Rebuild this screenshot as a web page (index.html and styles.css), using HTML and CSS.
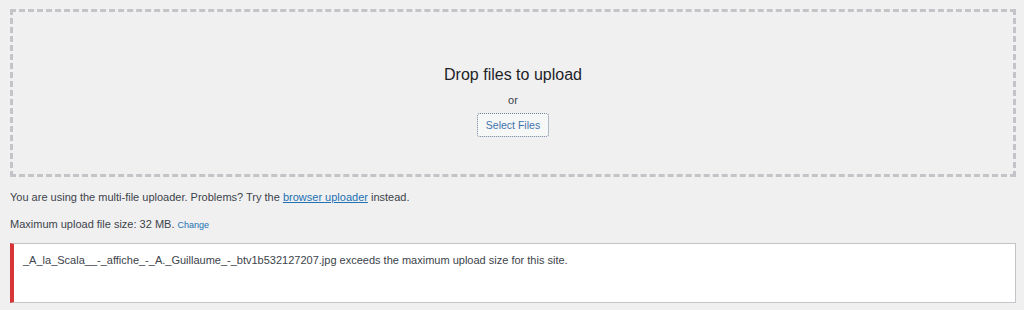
FILE: index.html
```html
<!DOCTYPE html>
<html lang="en">
<head>
    <meta charset="UTF-8" />
    <title>Upload New Media</title>
    <link rel="stylesheet" href="styles.css">
</head>
<body>
    <div class="drop-area">
        <p class="drop-title">Drop files to upload</p>
        <p class="drop-or">or</p>
        <button class="select-btn">Select Files</button>
    </div>
    <p class="info">You are using the multi-file uploader. Problems? Try the <a href="#">browser uploader</a> instead.</p>
    <p class="info">Maximum upload file size: 32 MB. <a href="#" class="change">Change</a></p>
    <div class="notice-error">
        <p>_A_la_Scala__-_affiche_-_A._Guillaume_-_btv1b532127207.jpg exceeds the maximum upload size for this site.</p>
    </div>
</body>
</html>
```

FILE: styles.css
```css
body {
    font-family: 'Liberation Sans', Arial, sans-serif;
    margin: 0;
    padding: 9px 8px 0 10px;
    background-color: #f0f0f1;
    color: #3c434a;
    font-size: 11px;
}
.drop-area {
    border: 3px dashed #c3c4c7;
    height: 168px;
    box-sizing: border-box;
    display: flex;
    flex-direction: column;
    align-items: center;
    justify-content: center;
    padding-top: 16px;
}
.drop-title {
    margin: 0;
    font-size: 16px;
    color: #1d2327;
}
.drop-or {
    margin: 10px 0 7px;
    font-size: 11px;
}
.select-btn {
    font-family: inherit;
    font-size: 10.5px;
    color: #3f74ad;
    background: #f6f7f7;
    border: 1px dotted #6f7f99;
    border-radius: 3px;
    height: 24px;
    padding: 0 8px;
}
.info {
    margin: 13px 0 0;
    line-height: 15px;
}
.info + .info {
    margin-top: 12px;
}
.info a {
    color: #2271b1;
}
.info a.change {
    text-decoration: none;
    font-size: 9px;
}
.notice-error {
    margin-top: 10px;
    background: #fff;
    border: 1px solid #c3c4c7;
    border-left: 4px solid #d63638;
    height: 60px;
    box-sizing: border-box;
    padding: 9px 9px;
}
.notice-error p {
    margin: 0;
    line-height: 15px;
}
```
